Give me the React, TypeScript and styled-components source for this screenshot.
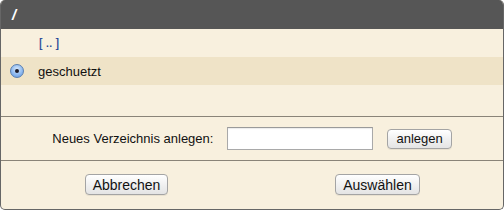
import React from 'react'
import styled, { createGlobalStyle } from 'styled-components'

const GlobalStyle = createGlobalStyle`
  html, body {
    margin: 0;
    padding: 0;
    background: #ffffff;
  }
  body {
    font-family: "Liberation Sans", Arial, Helvetica, sans-serif;
  }
`

export default function App() {
  return (
    <>
      <GlobalStyle />
      <Frame>
        <Header>/</Header>
        <List>
          <Row>
            <RadioCell />
            <UpLink>[ .. ]</UpLink>
          </Row>
          <Row selected>
            <RadioCell>
              <Radio />
            </RadioCell>
            <Name>geschuetzt</Name>
          </Row>
        </List>
        <FormRow>
          <Label>Neues Verzeichnis anlegen:</Label>
          <TextInput type="text" />
          <Button small>anlegen</Button>
        </FormRow>
        <Footer>
          <FooterCell>
            <Button>Abbrechen</Button>
          </FooterCell>
          <FooterCell>
            <Button>Auswählen</Button>
          </FooterCell>
        </Footer>
      </Frame>
    </>
  )
}

const Frame = styled.div`
  width: 504px;
  height: 210px;
  box-sizing: border-box;
  border: 1px solid #666;
  border-top: none;
  border-radius: 5px;
  overflow: hidden;
  background: #f8f0de;
  display: flex;
  flex-direction: column;
`

const Header = styled.div`
  height: 29px;
  margin: 0 -1px;
  background: #565656;
  color: #fff;
  font-weight: bold;
  font-size: 15px;
  font-style: italic;
  line-height: 29px;
  padding-left: 12px;
  flex-shrink: 0;
`

const List = styled.div`
  height: 87px;
  flex-shrink: 0;
`

const Row = styled.div<{ selected?: boolean }>`
  display: flex;
  align-items: center;
  height: 28px;
  background: ${(p) => (p.selected ? '#efe3c7' : 'transparent')};
`

const RadioCell = styled.div`
  width: 32px;
  margin-right: 5px;
  display: flex;
  justify-content: center;
`

const Radio = styled.span`
  width: 14px;
  height: 14px;
  border-radius: 50%;
  box-sizing: border-box;
  border: 1px solid #5a7fb0;
  background: radial-gradient(circle at 50% 35%, #d6e8fb 0%, #8fbaf0 55%, #5d92dc 100%);
  display: flex;
  align-items: center;
  justify-content: center;
  &::after {
    content: '';
    width: 4px;
    height: 4px;
    border-radius: 50%;
    background: #1b1b2a;
  }
`

const UpLink = styled.span`
  font-size: 12px;
  color: #173f94;
  -webkit-text-stroke: 0.2px #173f94;
  padding-left: 1px;
`

const Name = styled.span`
  font-size: 13px;
  color: #111;
`

const FormRow = styled.div`
  height: 43px;
  flex-shrink: 0;
  border-top: 1px solid #8a8478;
  border-bottom: 1px solid #8a8478;
  display: flex;
  align-items: center;
  justify-content: center;
`

const Label = styled.span`
  font-size: 13px;
  color: #111;
  margin-right: 14px;
`

const TextInput = styled.input`
  width: 146px;
  height: 23px;
  box-sizing: border-box;
  border: 1px solid #a9a9a9;
  border-top-color: #9a9a9a;
  background: #fff;
  margin: 0 14px 0 0;
  padding: 2px 4px;
  font-size: 13px;
  font-family: inherit;
  outline: none;
  box-shadow: inset 0 1px 1px rgba(0, 0, 0, 0.08);
`

const Button = styled.button<{ small?: boolean }>`
  height: ${(p) => (p.small ? '20px' : '21px')};
  padding: 0 ${(p) => (p.small ? '8px' : '7px')};
  box-sizing: border-box;
  border: 1px solid #a4a4a4;
  border-radius: 4px;
  background: linear-gradient(#ffffff, #f1f1f1 50%, #e4e4e4);
  font-family: inherit;
  font-size: ${(p) => (p.small ? '13px' : '14px')};
  color: #111;
  line-height: 1;
  box-shadow: 0 1px 0 rgba(0, 0, 0, 0.06);
`

const Footer = styled.div`
  flex: 1;
  display: grid;
  grid-template-columns: 1fr 1fr;
  align-items: center;
  padding-bottom: 1px;
`

const FooterCell = styled.div`
  display: flex;
  justify-content: center;
`
